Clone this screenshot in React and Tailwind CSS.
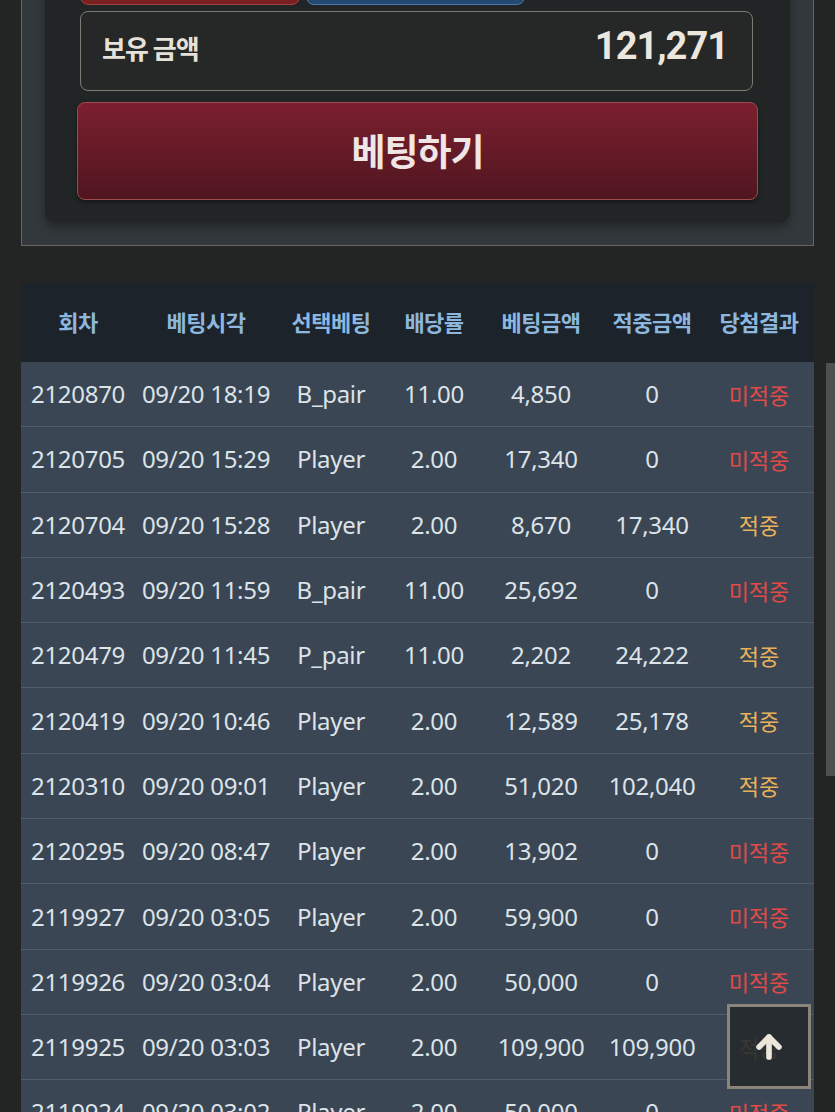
import { ArrowUp } from "lucide-react";

const rows = [
    ["2120870", "09/20 18:19", "B_pair", "11.00", "4,850", "0", false],
    ["2120705", "09/20 15:29", "Player", "2.00", "17,340", "0", false],
    ["2120704", "09/20 15:28", "Player", "2.00", "8,670", "17,340", true],
    ["2120493", "09/20 11:59", "B_pair", "11.00", "25,692", "0", false],
    ["2120479", "09/20 11:45", "P_pair", "11.00", "2,202", "24,222", true],
    ["2120419", "09/20 10:46", "Player", "2.00", "12,589", "25,178", true],
    ["2120310", "09/20 09:01", "Player", "2.00", "51,020", "102,040", true],
    ["2120295", "09/20 08:47", "Player", "2.00", "13,902", "0", false],
    ["2119927", "09/20 03:05", "Player", "2.00", "59,900", "0", false],
    ["2119926", "09/20 03:04", "Player", "2.00", "50,000", "0", false],
    ["2119925", "09/20 03:03", "Player", "2.00", "109,900", "109,900", true],
    ["2119924", "09/20 03:02", "Player", "2.00", "50,000", "0", false],
];

const headers = ["회차", "베팅시각", "선택베팅", "배당률", "베팅금액", "적중금액", "당첨결과"];
const widths = ["w-[114px]", "w-[142px]", "w-[108px]", "w-[98px]", "w-[116px]", "w-[106px]", "w-[108px]"];

export default function App() {
    return (
        <div className="relative h-[1112px] overflow-hidden bg-[#232525]" style={{ fontFamily: "'Noto Sans', 'Noto Sans CJK KR', sans-serif" }}>
            {/* bet panel, top part scrolled off */}
            <div className="mx-[21px] -mt-[71px] border border-[#68665f] bg-[#32383b] px-[23px] pb-[22px]">
                <div className="rounded-xl bg-[#222525] px-[32px] pb-[23px] shadow-[0_4px_10px_rgba(0,0,0,0.35)]">
                    <div className="flex gap-[6px] px-[3px]">
                        <div className="h-[75px] w-[220px] rounded-b-lg border border-[#a04040] bg-[#7a2020]"></div>
                        <div className="h-[75px] w-[219px] rounded-b-lg border border-[#4a78a8] bg-[#224a72]"></div>
                    </div>
                    <div className="ml-[3px] mr-[5px] mt-[6px] flex h-[80px] items-start justify-between rounded-lg border border-[#7e7b73] bg-[#262828] pl-[21px] pr-[24px] pt-[14px]">
                        <div className="mt-[2px] text-[26px] font-bold text-[#e6e2da]" style={{ fontFamily: "'Noto Sans CJK KR', sans-serif", letterSpacing: "-1px" }}>보유 금액</div>
                        <div className="text-[38px] font-bold leading-[40px] text-[#ebe7df]" style={{ fontFamily: "Roboto, sans-serif", letterSpacing: "-1px" }}>121,271</div>
                    </div>
                    <div className="mt-[11px] flex h-[98px] items-center justify-center rounded-lg border border-[#a0494f] bg-gradient-to-b from-[#7c1f2e] to-[#4f1620] shadow-[0_2px_4px_rgba(0,0,0,0.4)]">
                        <span className="text-[37px] font-bold text-[#f1e6e6]" style={{ fontFamily: "'Noto Sans CJK KR', sans-serif", letterSpacing: "-1px" }}>베팅하기</span>
                    </div>
                </div>
            </div>

            {/* history table */}
            <div className="mx-[21px] mt-[37px]">
                <div className="flex h-[79px] items-center bg-[#1c232a] pb-[2px]">
                    {headers.map((h, i) => (
                        <div key={h} className={widths[i] + " text-center text-[22px] font-bold text-[#8db7de]"} style={{ fontFamily: "'Noto Sans CJK KR', sans-serif", letterSpacing: "-0.5px" }}>
                            {h}
                        </div>
                    ))}
                </div>
                {rows.map(r => (
                    <div key={r[0]} className="flex h-[65.3px] items-center border-b border-[#4c5e6d] bg-[#3a4653] text-[24px] text-[#dce3e9]">
                        {r.slice(0, 6).map((c, i) => (
                            <div key={i} className={widths[i] + " text-center whitespace-nowrap tracking-[-0.3px]"}>{c}</div>
                        ))}
                        <div className={widths[6] + " text-center text-[22px] " + (r[6] ? "text-[#e9b25a]" : "text-[#e24a48]")} style={{ fontFamily: "'Noto Sans CJK KR', sans-serif" }}>
                            {r[6] ? "적중" : "미적중"}
                        </div>
                    </div>
                ))}
            </div>

            {/* scrollbar */}
            <div className="absolute left-[826px] top-[363px] h-[413px] w-[9px] bg-[#4e5050]"></div>

            {/* scroll to top */}
            <div className="absolute left-[727px] top-[1004px] flex h-[85px] w-[84px] items-center justify-center border-[3px] border-[#8b8579] bg-[#25292c]/90">
                <ArrowUp size={34} strokeWidth={4} className="text-[#ece6dc]" />
            </div>
        </div>
    );
}
